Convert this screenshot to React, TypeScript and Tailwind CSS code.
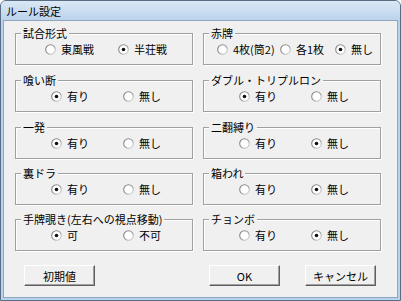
import React from "react";

const font = { fontFamily: '"Noto Sans CJK JP", "Noto Sans", sans-serif' };

function Radio({ checked }: { checked: boolean }) {
  return (
    <svg width="11" height="11" viewBox="0 0 11 11" className="shrink-0">
      <defs>
        <linearGradient id="rg" x1="0" y1="0" x2="1" y2="1">
          <stop offset="0" stopColor="#7a7a7a" />
          <stop offset="0.55" stopColor="#9a9a9a" />
          <stop offset="1" stopColor="#e6e6e6" />
        </linearGradient>
      </defs>
      <circle cx="5.5" cy="5.5" r="4.8" fill="#ffffff" stroke="url(#rg)" strokeWidth="1.1" />
      {checked && <circle cx="5.5" cy="5.5" r="1.8" fill="#111111" />}
    </svg>
  );
}

type Opt = { label: string; checked?: boolean; w: string };

function Option({ o }: { o: Opt }) {
  return (
    <div className={`flex items-center gap-[5px] ${o.w}`}>
      <Radio checked={!!o.checked} />
      <span className="text-[11px] leading-[12px] text-black whitespace-nowrap">{o.label}</span>
    </div>
  );
}

function Group({ title, pl, opts }: { title: string; pl: string; opts: Opt[] }) {
  return (
    <div className="relative h-[32px] border border-[#a0a0a0] shadow-[1px_1px_0_#ffffff,inset_1px_1px_0_#ffffff]">
      <span className="absolute left-[5px] -top-[7px] px-[2px] bg-[#f0f0f0] text-[11px] leading-[12px] text-black whitespace-nowrap">
        {title}
      </span>
      <div className={`flex h-full items-center ${pl}`}>
        {opts.map((o, i) => (
          <Option key={i} o={o} />
        ))}
      </div>
    </div>
  );
}

function Button({ label, ml }: { label: string; ml: string }) {
  return (
    <div
      className={`${ml} w-[71px] h-[21px] flex items-center justify-center bg-[#f0f0f0] border border-t-[#ffffff] border-l-[#ffffff] border-r-[#5f5f5f] border-b-[#5f5f5f] shadow-[inset_-1px_-1px_0_#a0a0a0] text-[11px] leading-[12px] text-black`}
    >
      {label}
    </div>
  );
}

export default function App() {
  const rows: { left: [string, string, Opt[]]; right: [string, string, Opt[]]; mt: string }[] = [
    {
      mt: "mt-0",
      left: ["試合形式", "pl-[29px]", [{ label: "東風戦", w: "w-[73px]" }, { label: "半荘戦", checked: true, w: "w-[60px]" }]],
      right: [
        "赤牌",
        "pl-[13px]",
        [
          { label: "4枚(筒2)", w: "w-[63px]" },
          { label: "各1枚", w: "w-[55px]" },
          { label: "無し", checked: true, w: "w-[40px]" },
        ],
      ],
    },
    {
      mt: "mt-[15px]",
      left: ["喰い断", "pl-[35px]", [{ label: "有り", checked: true, w: "w-[72px]" }, { label: "無し", w: "w-[50px]" }]],
      right: ["ダブル・トリプルロン", "pl-[35px]", [{ label: "有り", checked: true, w: "w-[72px]" }, { label: "無し", w: "w-[50px]" }]],
    },
    {
      mt: "mt-[15px]",
      left: ["一発", "pl-[35px]", [{ label: "有り", checked: true, w: "w-[72px]" }, { label: "無し", w: "w-[50px]" }]],
      right: ["二翻縛り", "pl-[35px]", [{ label: "有り", w: "w-[72px]" }, { label: "無し", checked: true, w: "w-[50px]" }]],
    },
    {
      mt: "mt-[14px]",
      left: ["裏ドラ", "pl-[35px]", [{ label: "有り", checked: true, w: "w-[72px]" }, { label: "無し", w: "w-[50px]" }]],
      right: ["箱われ", "pl-[35px]", [{ label: "有り", w: "w-[72px]" }, { label: "無し", checked: true, w: "w-[50px]" }]],
    },
    {
      mt: "mt-[14px]",
      left: ["手牌覗き(左右への視点移動)", "pl-[35px]", [{ label: "可", checked: true, w: "w-[72px]" }, { label: "不可", w: "w-[50px]" }]],
      right: ["チョンボ", "pl-[35px]", [{ label: "有り", w: "w-[72px]" }, { label: "無し", checked: true, w: "w-[50px]" }]],
    },
  ];

  return (
    <div style={font} className="w-[401px] h-[301px] flex flex-col border border-[#5a6d84] rounded-t-[6px] overflow-hidden bg-[#b9d1ea]">
      <div className="h-[19px] shrink-0 flex items-center pl-[5px] bg-gradient-to-b from-[#dbe8f5] to-[#bcd3ec]">
        <span className="text-[11px] leading-[12px] text-black">ルール設定</span>
      </div>
      <div className="mx-[2px] mb-[2px] h-[278px] border border-[#8fa6bf] bg-[#f0f0f0] flex flex-col pt-[12px] pl-[11px]">
        {rows.map((r, i) => (
          <div key={i} className={`grid grid-cols-[178px_178px] gap-x-[10px] ${r.mt}`}>
            <Group title={r.left[0]} pl={r.left[1]} opts={r.left[2]} />
            <Group title={r.right[0]} pl={r.right[1]} opts={r.right[2]} />
          </div>
        ))}
        <div className="flex mt-[14px]">
          <Button label="初期値" ml="ml-[9px]" />
          <Button label="OK" ml="ml-[114px]" />
          <Button label="キャンセル" ml="ml-[25px]" />
        </div>
      </div>
    </div>
  );
}
